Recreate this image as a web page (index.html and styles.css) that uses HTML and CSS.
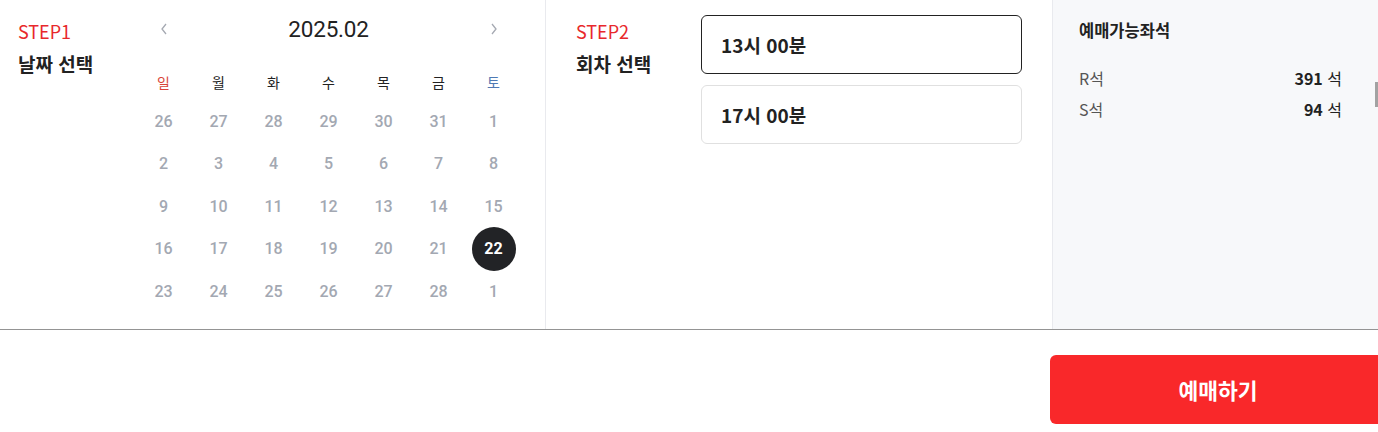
FILE: index.html
```html
<!DOCTYPE html>
<html lang="ko">
<head>
<meta charset="utf-8">
<link rel="stylesheet" href="styles.css">
</head>
<body>
<div class="page">
  <div class="top">
    <section class="panel step1">
      <div class="label">
        <div class="step">STEP1</div>
        <div class="step-title">날짜 선택</div>
      </div>
      <div class="calendar">
        <div class="cal-head">
          <span class="arrow"><svg width="10" height="14" viewBox="0 0 10 14"><path d="M7 2 L3 7 L7 12" fill="none" stroke="#a5a9b2" stroke-width="1.3"/></svg></span>
          <span class="month">2025.02</span>
          <span class="arrow"><svg width="10" height="14" viewBox="0 0 10 14"><path d="M3 2 L7 7 L3 12" fill="none" stroke="#a5a9b2" stroke-width="1.3"/></svg></span>
        </div>
        <div class="grid weekdays">
          <span class="sun">일</span><span>월</span><span>화</span><span>수</span><span>목</span><span>금</span><span class="sat">토</span>
        </div>
        <div class="grid dates">
          <span>26</span><span>27</span><span>28</span><span>29</span><span>30</span><span>31</span><span>1</span>
          <span>2</span><span>3</span><span>4</span><span>5</span><span>6</span><span>7</span><span>8</span>
          <span>9</span><span>10</span><span>11</span><span>12</span><span>13</span><span>14</span><span>15</span>
          <span>16</span><span>17</span><span>18</span><span>19</span><span>20</span><span>21</span><span class="selected"><b>22</b></span>
          <span>23</span><span>24</span><span>25</span><span>26</span><span>27</span><span>28</span><span>1</span>
        </div>
      </div>
    </section>
    <section class="panel step2">
      <div class="label">
        <div class="step">STEP2</div>
        <div class="step-title">회차 선택</div>
      </div>
      <div class="times">
        <div class="time active">13시 00분</div>
        <div class="time">17시 00분</div>
      </div>
    </section>
    <section class="panel seats">
      <div class="seats-title">예매가능좌석</div>
      <div class="seat-row"><span class="seat-name">R석</span><span class="seat-count"><b>391</b> 석</span></div>
      <div class="seat-row"><span class="seat-name">S석</span><span class="seat-count"><b>94</b> 석</span></div>
      <div class="scroll-thumb"></div>
    </section>
  </div>
  <div class="bottom">
    <button class="reserve">예매하기</button>
  </div>
</div>
</body>
</html>
```

FILE: styles.css
```css
* { box-sizing: border-box; }
html, body { margin: 0; padding: 0; background: #fff; }
body {
  font-family: "Noto Sans CJK KR", "Noto Sans", sans-serif;
  color: #222;
}
.page {
  width: 1378px;
  height: 432px;
  overflow: hidden;
}
.top {
  display: flex;
  height: 330px;
  border-bottom: 1px solid #949494;
}
.panel { height: 100%; }
.step1 {
  width: 546px;
  border-right: 1px solid #e9eaee;
  display: flex;
}
.label { padding-top: 18px; }
.step1 .label { width: 136px; padding-left: 18px; }
.step {
  color: #e8282c;
  font-size: 18px;
  line-height: 26px;
}
.step-title {
  margin-top: 7px;
  font-size: 19px;
  font-weight: 700;
  line-height: 26px;
  color: #222;
}
.calendar {
  width: 385px;
  padding-top: 10px;
}
.cal-head {
  display: grid;
  grid-template-columns: 55px 1fr 55px;
  height: 38px;
  align-items: center;
  justify-items: center;
}
.arrow { display: flex; }
.month {
  font-family: Roboto, "Liberation Sans", sans-serif;
  font-size: 22.5px;
  color: #222;
  letter-spacing: -0.2px;
}
.grid {
  display: grid;
  grid-template-columns: repeat(7, 55px);
  justify-items: center;
  align-items: center;
}
.weekdays {
  margin-top: 16px;
  height: 36px;
  font-size: 14px;
  color: #222;
}
.weekdays .sun { color: #d9443a; }
.weekdays .sat { color: #4f79b3; }
.dates {
  grid-auto-rows: 42.5px;
  font-family: Roboto, "Liberation Sans", sans-serif;
  font-size: 16px;
  font-weight: 500;
  color: #a3a8b2;
}
.dates .selected b {
  width: 44px;
  height: 44px;
  border-radius: 50%;
  background: #222326;
  color: #fff;
  font-weight: 700;
  display: flex;
  align-items: center;
  justify-content: center;
}
.step2 {
  width: 507px;
  border-right: 1px solid #e9eaee;
  display: flex;
}
.step2 .label { width: 155px; padding-left: 30px; }
.times {
  padding-top: 15px;
  display: flex;
  flex-direction: column;
  gap: 11px;
}
.time {
  width: 321px;
  height: 59px;
  border: 1px solid #e0e0e0;
  border-radius: 6px;
  padding-left: 19px;
  display: flex;
  align-items: center;
  font-size: 19px;
  font-weight: 700;
  color: #222;
}
.time.active { border-color: #222; }
.seats {
  flex: 1;
  background: #f7f8fa;
  padding: 17px 36px 0 26px;
  position: relative;
}
.seats-title {
  font-size: 16.5px;
  font-weight: 700;
  line-height: 26px;
  color: #222;
}
.seat-row {
  display: flex;
  justify-content: space-between;
  font-size: 16px;
  line-height: 31px;
  color: #555;
}
.seats-title + .seat-row { margin-top: 20px; }
.seat-count { color: #222; }
.seat-count b { font-weight: 700; }
.scroll-thumb {
  position: absolute;
  right: 0;
  top: 82px;
  width: 3px;
  height: 25px;
  background: #a2a2a2;
}
.bottom {
  display: flex;
  justify-content: flex-end;
  padding-top: 25px;
  margin-right: -8px;
}
.reserve {
  width: 336px;
  height: 69px;
  border: none;
  border-radius: 6px;
  background: #f9282a;
  color: #fff;
  font-family: "Noto Sans CJK KR", sans-serif;
  font-size: 21.5px;
  font-weight: 700;
}
```
